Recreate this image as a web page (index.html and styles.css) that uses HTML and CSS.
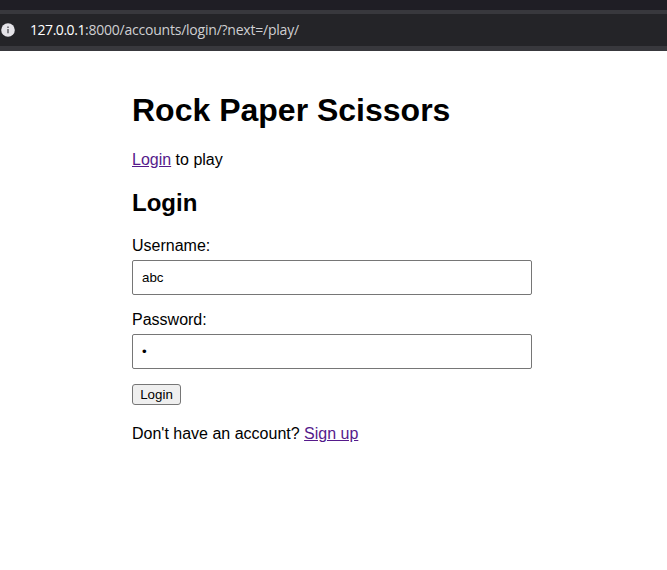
FILE: index.html
```html
<!DOCTYPE html>
<html lang="en">
<head>
<meta charset="utf-8">
<title>Rock Paper Scissors</title>
<link rel="stylesheet" href="styles.css">
</head>
<body>
<div class="tabs"></div>
<div class="toolbar">
<svg class="info" viewBox="0 0 14 14"><circle cx="7" cy="7" r="6.8" fill="#e4e3e8"/><path d="M7 6v4.2M7 3.5v1.5" stroke="#646469" stroke-width="1.6"/></svg>
<div class="address"><span class="host">127.0.0.1</span>:8000/accounts/login/?next=/play/</div>
</div>
<main class="page">
<h1>Rock Paper Scissors</h1>
<p class="intro"><a href="#">Login</a> to play</p>
<h2>Login</h2>
<form>
<label for="user">Username:</label>
<input id="user" type="text" value="abc">
<label for="pass">Password:</label>
<input id="pass" type="password" value="a">
<button type="button">Login</button>
</form>
<p class="signup">Don't have an account? <a href="#">Sign up</a></p>
</main>
</body>
</html>
```
FILE: styles.css
```css
* { box-sizing: border-box; }
body { margin: 0; background: #fff; color: #000; font: 16px/18px "Liberation Sans", Arial, sans-serif; overflow: hidden; }
.tabs { height: 14px; background: #1f1e25; border-bottom: 4px solid #38383d; }
.toolbar { height: 37px; display: flex; align-items: center; background: #242428; border-bottom: 5px solid #38383d; }
.info { width: 14px; height: 14px; margin-left: 1px; }
.address { margin-left: 15px; font: 14px/20px "Open Sans", sans-serif; letter-spacing: -0.22px; color: #cfcfd2; white-space: nowrap; }
.host { color: #fff; letter-spacing: -0.46px; }
.page { width: 400px; margin-left: 132px; padding-top: 41px; }
h1 { margin: 0 0 22px; font-size: 32px; line-height: 37px; }
p { margin: 0; }
h2 { margin: 20px 0; font-size: 24px; line-height: 28px; }
a { color: #551a8b; text-decoration: underline; }
label { display: block; margin-bottom: 5px; }
input { display: block; width: 400px; height: 35px; margin: 0 0 16px; padding: 8px 9px; border: 1px solid #767676; border-radius: 2px; font: 13.333px "Liberation Sans", Arial, sans-serif; color: #000; background: #fff; }
button { display: block; width: 49px; height: 21px; margin-top: -1px; padding: 0; border: 1px solid #767676; border-radius: 3px; background: #efefef; color: #000; font: 13.333px "Liberation Sans", Arial, sans-serif; }
.signup { margin-top: 20px; }
```
